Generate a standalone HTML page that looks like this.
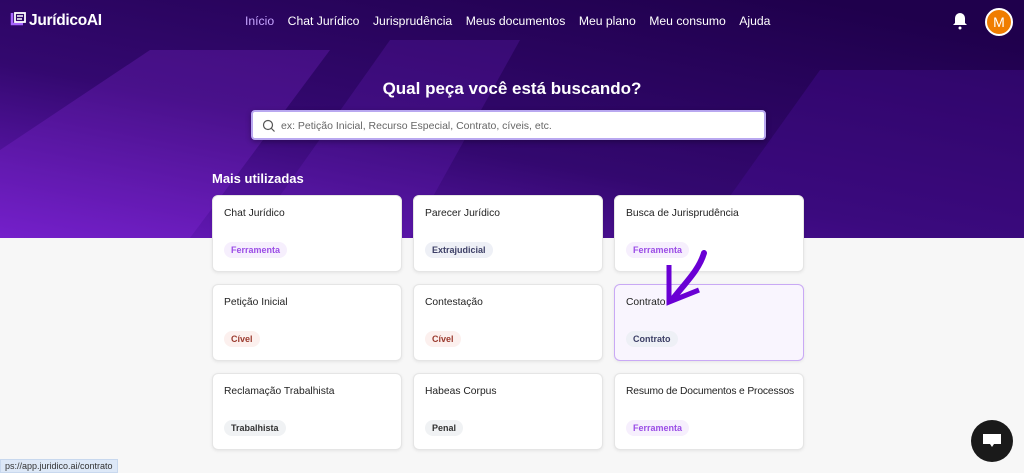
<!DOCTYPE html>
<html><head><meta charset="utf-8"><style>
*{margin:0;padding:0;box-sizing:border-box}
body{width:1024px;height:473px;overflow:hidden;background:#f7f7f7;font-family:"Liberation Sans",sans-serif;position:relative}
.hero{position:absolute;left:0;top:0;width:1024px;height:238px;background:#21004f;overflow:hidden}
.nav{position:absolute;top:0;left:0;width:1024px;height:44px}
.logo{position:absolute;left:10px;top:11px;color:#fff;font-size:15.5px;font-weight:bold;letter-spacing:-0.3px}
.links{position:absolute;left:245px;top:14px;color:#fff;font-size:12.2px;white-space:nowrap}
.links span{margin-right:13.5px}
.h1{position:absolute;top:79px;width:1024px;text-align:center;color:#fff;font-size:17px;font-weight:bold}
.search{position:absolute;left:251px;top:110px;width:515px;height:30px;background:#fff;border-radius:4px;border:2px solid #b9a8f0;box-shadow:0 2px 6px rgba(0,0,0,.3)}
.search span{position:absolute;left:28px;top:8px;font-size:10.5px;color:#666}
.mais{position:absolute;left:212px;top:171px;color:#fff;font-size:13px;font-weight:bold}
.card{position:absolute;width:190px;height:77px;background:#fff;border-radius:6px;border:1px solid #e5e5e5;box-shadow:0 1px 3px rgba(0,0,0,.08)}
.card .t{position:absolute;left:11px;top:12px;font-size:10.3px;color:#222;white-space:nowrap}
.tag{position:absolute;left:11px;top:46px;font-size:9px;font-weight:bold;padding:3px 7px;border-radius:8px}
.f{color:#9b4de6;background:#f6effd}.c{color:#9b3a2e;background:#fcf0ee}.e{color:#3d3f66;background:#eef0f6}.n{color:#333;background:#f0f2f4}
</style></head><body>
<div class="hero">
<svg width="1024" height="238" style="position:absolute;left:0;top:0">
<defs><linearGradient id="g" x1="0" y1="1" x2="0.8" y2="0"><stop offset="0" stop-color="#6d1cc4"/><stop offset=".45" stop-color="#33086f"/><stop offset="1" stop-color="#1f004c"/></linearGradient></defs>
<rect width="1024" height="238" fill="url(#g)"/>
<polygon points="0,238 0,150 150,50 330,50 190,238" fill="#8a2be0" opacity=".25"/>
<polygon points="250,238 390,40 520,40 410,238" fill="#6a1ec0" opacity=".25"/>
<polygon points="700,238 820,70 1024,70 1024,238" fill="#4a0f9a" opacity=".35"/>
</svg>
<div class="nav">
<div class="logo"><svg width="16" height="16" style="vertical-align:-2px;margin-right:3px"><path d="M2 2v11h11" stroke="#a865ff" stroke-width="2.5" fill="none"/><rect x="5" y="2" width="10" height="9" fill="none" stroke="#fff" stroke-width="1.8"/><path d="M7 5h6M7 8h5" stroke="#fff" stroke-width="1.5"/></svg>JurídicoAI</div>
<div class="links"><span style="color:#c6a4ff">Início</span><span>Chat Jurídico</span><span>Jurisprudência</span><span>Meus documentos</span><span>Meu plano</span><span>Meu consumo</span><span>Ajuda</span></div>
<svg width="16" height="18" style="position:absolute;left:952px;top:12px"><path d="M8 1a5 5 0 0 0-5 5v5l-2 2h14l-2-2V6a5 5 0 0 0-5-5z" fill="#fff"/><circle cx="8" cy="16" r="1.5" fill="#fff"/></svg>
<div style="position:absolute;left:985px;top:8px;width:28px;height:28px;border-radius:50%;background:#f07d00;border:2px solid #fff;color:#fff;font-size:14px;text-align:center;line-height:24px">M</div>
</div>
<div class="h1">Qual peça você está buscando?</div>
<div class="search"><svg width="14" height="14" style="position:absolute;left:9px;top:7px"><circle cx="6" cy="6" r="4.5" stroke="#555" fill="none" stroke-width="1.2"/><path d="M9.5 9.5l3 3" stroke="#555" stroke-width="1.2"/></svg><span>ex: Petição Inicial, Recurso Especial, Contrato, cíveis, etc.</span></div>
<div class="mais">Mais utilizadas</div>
</div>
<div class="card" style="left:212px;top:195px"><div class="t">Chat Jurídico</div><div class="tag f">Ferramenta</div></div>
<div class="card" style="left:413px;top:195px"><div class="t">Parecer Jurídico</div><div class="tag e">Extrajudicial</div></div>
<div class="card" style="left:614px;top:195px"><div class="t">Busca de Jurisprudência</div><div class="tag f">Ferramenta</div></div>
<div class="card" style="left:212px;top:284px"><div class="t">Petição Inicial</div><div class="tag c">Cível</div></div>
<div class="card" style="left:413px;top:284px"><div class="t">Contestação</div><div class="tag c">Cível</div></div>
<div class="card" style="left:614px;top:284px;background:#f9f5fe;border-color:#c9a9f5"><div class="t">Contrato</div><div class="tag e">Contrato</div></div>
<div class="card" style="left:212px;top:373px"><div class="t">Reclamação Trabalhista</div><div class="tag n">Trabalhista</div></div>
<div class="card" style="left:413px;top:373px"><div class="t">Habeas Corpus</div><div class="tag n">Penal</div></div>
<div class="card" style="left:614px;top:373px"><div class="t" style="letter-spacing:-0.15px">Resumo de Documentos e Processos</div><div class="tag f">Ferramenta</div></div>
<svg width="50" height="60" style="position:absolute;left:664px;top:250px"><path d="M40 3C35 20 22 32 8 50" stroke="#6a00d4" stroke-width="6" fill="none" stroke-linecap="round"/><path d="M5 15V52L35 40" stroke="#6a00d4" stroke-width="5" fill="none"/></svg>
<div style="position:absolute;left:0;top:459px;height:14px;padding:1px 4px;background:#dde8f7;border:1px solid #c8d8ee;font-size:9px;color:#333">ps://app.juridico.ai/contrato</div>
<div style="position:absolute;left:971px;top:420px;width:42px;height:42px;border-radius:50%;background:#1a1a1a"><svg width="20" height="16" style="position:absolute;left:11px;top:13px"><path d="M1 1h18v10h-7l-2 3-2-3H1z" fill="#fff"/></svg></div>
</body></html>
